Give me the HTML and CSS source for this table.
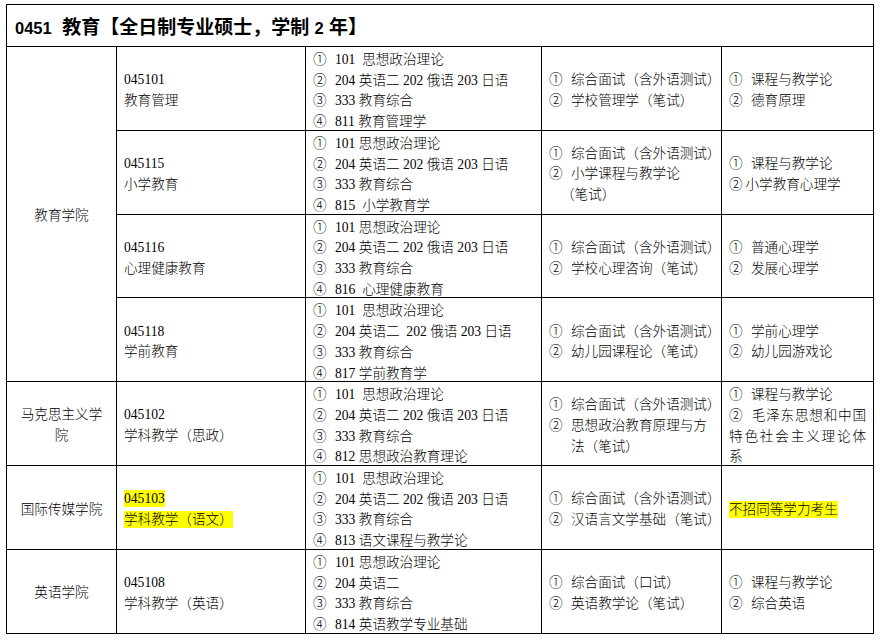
FILE: index.html
```html
<!DOCTYPE html>
<html lang="zh-CN">
<head>
<meta charset="utf-8">
<title>0451 教育</title>
<link rel="stylesheet" href="styles.css">
</head>
<body>
<table class="plan">
  <colgroup>
    <col class="c-school">
    <col class="c-major">
    <col class="c-exam">
    <col class="c-retest">
    <col class="c-extra">
  </colgroup>
  <thead>
    <tr>
      <th colspan="5" class="title"><span class="num">0451</span>&nbsp; 教育【全日制专业硕士，学制 <span class="num">2</span> 年】</th>
    </tr>
  </thead>
  <tbody>
    <tr>
      <td class="school" rowspan="4">教育学院</td>
      <td class="major">045101<br>教育管理</td>
      <td class="exam">
        <div><span class="n">①</span>101&nbsp; 思想政治理论</div>
        <div><span class="n">②</span>204 英语二 202 俄语 203 日语</div>
        <div><span class="n">③</span>333 教育综合</div>
        <div><span class="n">④</span>811 教育管理学</div>
      </td>
      <td class="retest">
        <div><span class="n">①</span>综合面试（含外语测试）</div>
        <div><span class="n">②</span>学校管理学（笔试）</div>
      </td>
      <td class="extra">
        <div><span class="n">①</span>课程与教学论</div>
        <div><span class="n">②</span>德育原理</div>
      </td>
    </tr>
    <tr>
      <td class="major">045115<br>小学教育</td>
      <td class="exam">
        <div><span class="n">①</span>101 思想政治理论</div>
        <div><span class="n">②</span>204 英语二 202 俄语 203 日语</div>
        <div><span class="n">③</span>333 教育综合</div>
        <div><span class="n">④</span>815&nbsp; 小学教育学</div>
      </td>
      <td class="retest">
        <div><span class="n">①</span>综合面试（含外语测试）</div>
        <div><span class="n">②</span>小学课程与教学论</div>
        <div class="cont-paren">（笔试）</div>
      </td>
      <td class="extra">
        <div><span class="n">①</span>课程与教学论</div>
        <div><span class="n tight">②</span>小学教育心理学</div>
      </td>
    </tr>
    <tr>
      <td class="major">045116<br>心理健康教育</td>
      <td class="exam">
        <div><span class="n">①</span>101 思想政治理论</div>
        <div><span class="n">②</span>204 英语二 202 俄语 203 日语</div>
        <div><span class="n">③</span>333 教育综合</div>
        <div><span class="n">④</span>816&nbsp; 心理健康教育</div>
      </td>
      <td class="retest">
        <div><span class="n">①</span>综合面试（含外语测试）</div>
        <div><span class="n">②</span>学校心理咨询（笔试）</div>
      </td>
      <td class="extra">
        <div><span class="n">①</span>普通心理学</div>
        <div><span class="n">②</span>发展心理学</div>
      </td>
    </tr>
    <tr>
      <td class="major">045118<br>学前教育</td>
      <td class="exam">
        <div><span class="n">①</span>101&nbsp; 思想政治理论</div>
        <div><span class="n">②</span>204 英语二&nbsp; 202 俄语 203 日语</div>
        <div><span class="n">③</span>333 教育综合</div>
        <div><span class="n">④</span>817 学前教育学</div>
      </td>
      <td class="retest">
        <div><span class="n">①</span>综合面试（含外语测试）</div>
        <div><span class="n">②</span>幼儿园课程论（笔试）</div>
      </td>
      <td class="extra">
        <div><span class="n">①</span>学前心理学</div>
        <div><span class="n">②</span>幼儿园游戏论</div>
      </td>
    </tr>
    <tr>
      <td class="school">马克思主义学<br>院</td>
      <td class="major">045102<br>学科教学（思政）</td>
      <td class="exam">
        <div><span class="n">①</span>101&nbsp; 思想政治理论</div>
        <div><span class="n">②</span>204 英语二 202 俄语 203 日语</div>
        <div><span class="n">③</span>333 教育综合</div>
        <div><span class="n">④</span>812 思想政治教育理论</div>
      </td>
      <td class="retest">
        <div><span class="n">①</span>综合面试（含外语测试）</div>
        <div><span class="n">②</span>思想政治教育原理与方</div>
        <div class="cont">法（笔试）</div>
      </td>
      <td class="extra four">
        <div><span class="n">①</span>课程与教学论</div>
        <div class="just"><span class="n">②</span>毛泽东思想和中国</div>
        <div class="just">特色社会主义理论体</div>
        <div>系</div>
      </td>
    </tr>
    <tr>
      <td class="school">国际传媒学院</td>
      <td class="major"><span class="hl">045103</span><br><span class="hl">学科教学（语文）</span></td>
      <td class="exam">
        <div><span class="n">①</span>101&nbsp; 思想政治理论</div>
        <div><span class="n">②</span>204 英语二 202 俄语 203 日语</div>
        <div><span class="n">③</span>333 教育综合</div>
        <div><span class="n">④</span>813 语文课程与教学论</div>
      </td>
      <td class="retest">
        <div><span class="n">①</span>综合面试（含外语测试）</div>
        <div><span class="n">②</span>汉语言文学基础（笔试）</div>
      </td>
      <td class="extra">
        <div><span class="hl">不招同等学力考生</span></div>
      </td>
    </tr>
    <tr>
      <td class="school">英语学院</td>
      <td class="major">045108<br>学科教学（英语）</td>
      <td class="exam">
        <div><span class="n">①</span>101 思想政治理论</div>
        <div><span class="n">②</span>204 英语二</div>
        <div><span class="n">③</span>333 教育综合</div>
        <div><span class="n">④</span>814 英语教学专业基础</div>
      </td>
      <td class="retest">
        <div><span class="n">①</span>综合面试（口试）</div>
        <div><span class="n">②</span>英语教学论（笔试）</div>
      </td>
      <td class="extra">
        <div><span class="n">①</span>课程与教学论</div>
        <div><span class="n">②</span>综合英语</div>
      </td>
    </tr>
  </tbody>
</table>
</body>
</html>
```

FILE: styles.css
```css
html, body {
  margin: 0;
  padding: 0;
  background: #fff;
}

body {
  padding: 4px 0 0 6px;
  color: #000;
  font-family: "Liberation Serif", "Noto Sans CJK SC", serif;
  font-size: 13.6px;
  font-weight: 300;
}

.plan {
  border-collapse: collapse;
  table-layout: fixed;
  width: 867px;
}

.c-school { width: 110px; }
.c-major { width: 189px; }
.c-exam { width: 236px; }
.c-retest { width: 180px; }
.c-extra { width: 152px; }

.plan th,
.plan td {
  border: 1px solid #000;
  vertical-align: middle;
  line-height: 20.7px;
  padding: 5px 7px 0;
}

.plan .exam,
.plan .four {
  padding-top: 3px;
}

.exam div:last-child,
.four div:last-child {
  margin-bottom: -3px;
}

.plan .title {
  height: 36px;
  padding: 5px 8px 0;
  text-align: left;
  font-family: "Liberation Sans", "Noto Sans CJK SC", sans-serif;
  font-weight: 700;
  font-size: 19px;
  line-height: 24px;
}

.title .num {
  font-size: 16.5px;
}

.school {
  text-align: center;
}

.retest div,
.extra div,
.exam div {
  white-space: nowrap;
}

.n {
  display: inline-block;
  width: 22px;
}

.n.tight {
  width: 16.5px;
}

.cont {
  padding-left: 22px;
}

.cont-paren {
  padding-left: 12px;
}

.extra .just {
  text-align: justify;
  text-align-last: justify;
  white-space: normal;
}

.hl {
  background: #ffff00;
  padding: 1px 0;
}
```
